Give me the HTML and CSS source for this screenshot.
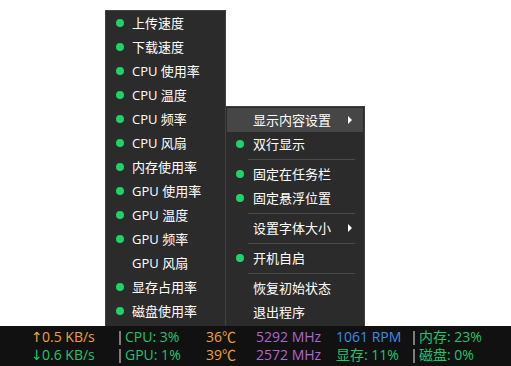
FILE: index.html
```html
<!DOCTYPE html>
<html lang="zh-CN">
<head>
    <meta charset="UTF-8">
    <title>TrafficMonitor 菜单</title>
    <link rel="stylesheet" href="styles.css">
</head>
<body>
    <div class="desktop">
        <!-- 主菜单：显示项目 -->
        <ul class="menu menu-main">
            <li class="menu-item checked">上传速度</li>
            <li class="menu-item checked">下载速度</li>
            <li class="menu-item checked">CPU 使用率</li>
            <li class="menu-item checked">CPU 温度</li>
            <li class="menu-item checked">CPU 频率</li>
            <li class="menu-item checked">CPU 风扇</li>
            <li class="menu-item checked">内存使用率</li>
            <li class="menu-item checked">GPU 使用率</li>
            <li class="menu-item checked">GPU 温度</li>
            <li class="menu-item checked">GPU 频率</li>
            <li class="menu-item">GPU 风扇</li>
            <li class="menu-item checked">显存占用率</li>
            <li class="menu-item checked">磁盘使用率</li>
        </ul>

        <!-- 右键菜单 -->
        <ul class="menu menu-context">
            <li class="menu-item active has-sub">显示内容设置</li>
            <li class="menu-item checked">双行显示</li>
            <li class="separator"></li>
            <li class="menu-item checked">固定在任务栏</li>
            <li class="menu-item checked">固定悬浮位置</li>
            <li class="separator"></li>
            <li class="menu-item has-sub">设置字体大小</li>
            <li class="separator"></li>
            <li class="menu-item checked">开机自启</li>
            <li class="separator"></li>
            <li class="menu-item">恢复初始状态</li>
            <li class="menu-item">退出程序</li>
        </ul>
    </div>

    <!-- 任务栏信息 -->
    <div class="taskbar">
        <span class="cell orange"><span class="arrow">↑</span>0.5 KB/s</span>
        <span class="cell bar"></span>
        <span class="cell green">CPU: 3%</span>
        <span class="cell orange">36℃</span>
        <span class="cell purple">5292 MHz</span>
        <span class="cell blue">1061 RPM</span>
        <span class="cell bar"></span>
        <span class="cell green">内存: 23%</span>

        <span class="cell green"><span class="arrow">↓</span>0.6 KB/s</span>
        <span class="cell bar"></span>
        <span class="cell green">GPU: 1%</span>
        <span class="cell orange">39℃</span>
        <span class="cell purple">2572 MHz</span>
        <span class="cell green">显存: 11%</span>
        <span class="cell bar"></span>
        <span class="cell green">磁盘: 0%</span>
    </div>
</body>
</html>
```

FILE: styles.css
```css
html, body {
    margin: 0;
    padding: 0;
}
body {
    width: 511px;
    height: 366px;
    display: flex;
    flex-direction: column;
    background: #ffffff;
    font-family: "Open Sans", "Noto Sans CJK SC", sans-serif;
    font-size: 13px;
    overflow: hidden;
}
.desktop {
    flex: 1;
    position: relative;
}
.menu {
    list-style: none;
    margin: 0;
    position: absolute;
    background: #2b2b2b;
    border: 1px solid #414141;
    box-sizing: border-box;
    color: #ffffff;
}
.menu-main {
    left: 105px;
    top: 10px;
    width: 121px;
    height: 318px;
    padding: 0;
    z-index: 1;
}
.menu-context {
    left: 225px;
    top: 106px;
    width: 140px;
    height: 222px;
    padding: 1px;
    z-index: 2;
}
.menu-item {
    position: relative;
    height: 24px;
    line-height: 24px;
    padding-left: 26px;
    white-space: nowrap;
}
.menu-item.checked::before {
    content: "";
    position: absolute;
    left: 10px;
    top: 8px;
    width: 8px;
    height: 8px;
    border-radius: 50%;
    background: #1ed46a;
}
.menu-context .menu-item.checked::before {
    left: 9px;
}
.menu-item.active {
    background: #464646;
}
.menu-item.has-sub::after {
    content: "";
    position: absolute;
    right: 11px;
    top: 8px;
    border-left: 4px solid #ffffff;
    border-top: 4px solid transparent;
    border-bottom: 4px solid transparent;
}
.separator {
    height: 1px;
    margin: 3px 8px 2px 21px;
    background: #4a4a4a;
}
.taskbar {
    height: 40px;
    box-sizing: border-box;
    background: #111111;
    padding: 2px 0 0 31px;
    display: grid;
    grid-template-columns: 88px 6px 81px 50px 80px 77px 6px 1fr;
    grid-auto-rows: 18px;
    line-height: 18px;
    font-size: 14px;
    white-space: nowrap;
    position: relative;
    z-index: 3;
}
.arrow {
    display: inline-block;
    width: 11px;
    font-family: "DejaVu Sans", sans-serif;
}
.bar::before {
    content: "";
    display: inline-block;
    width: 2px;
    height: 14px;
    margin-top: 3px;
    vertical-align: top;
    background: #7d7d7d;
}
.orange {
    color: #f0a030;
}
.green {
    color: #1fc56c;
}
.purple {
    color: #b067d2;
}
.blue {
    color: #3a8ee6;
}
```
